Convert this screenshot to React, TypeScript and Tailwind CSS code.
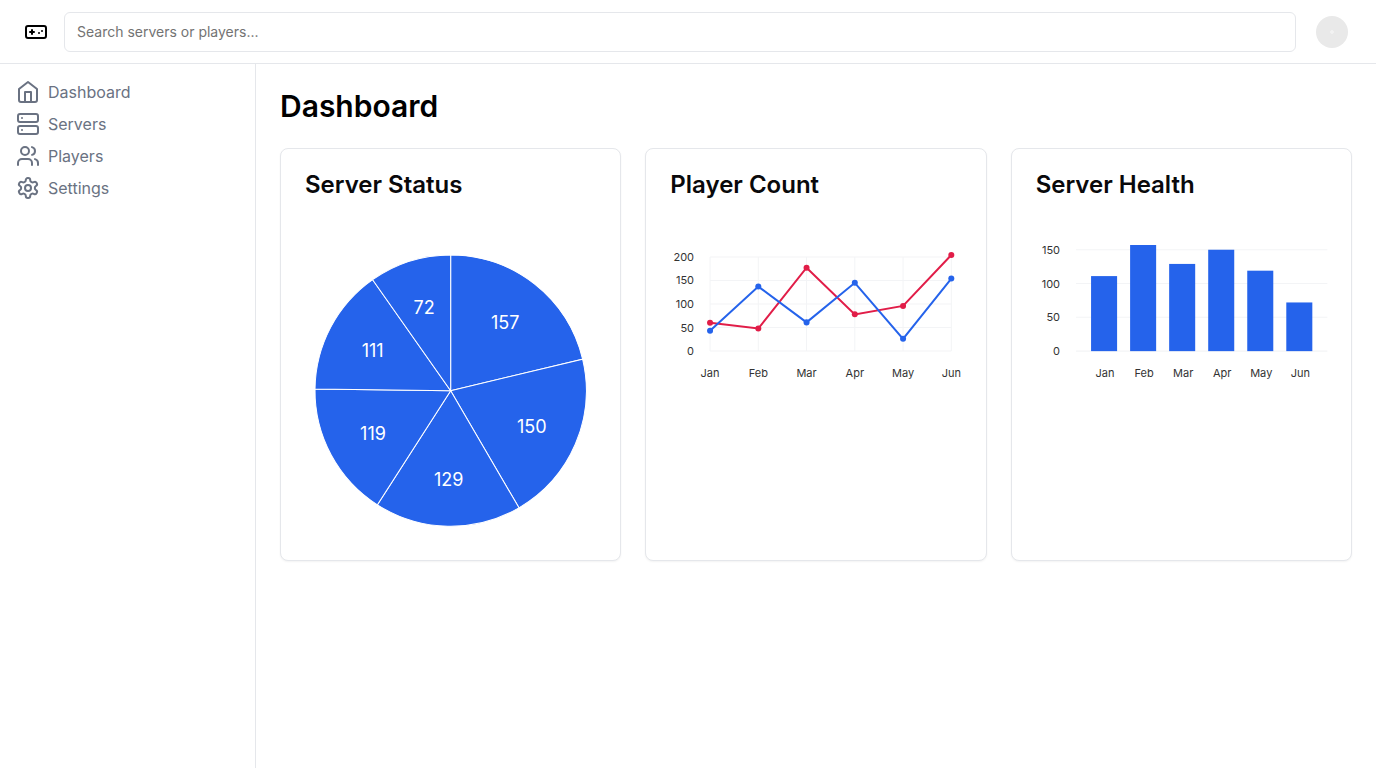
import { Gamepad, Server, Users } from "lucide-react";
import type { ComponentType, ReactNode } from "react";

const MONTHS = ["Jan", "Feb", "Mar", "Apr", "May", "Jun"];
const HEALTH = [111, 157, 129, 150, 119, 72];
const SERIES = [
  { id: "mobile", values: [60, 48, 177, 78, 96, 204], fill: "fill-[#e11d48]", line: "stroke-[#e11d48]" },
  { id: "desktop", values: [43, 137, 61, 145, 26, 154], fill: "fill-[#2563eb]", line: "stroke-[#2563eb]" },
];

type IconProps = { className?: string };

function OutlineIcon({ className, children }: IconProps & { children: ReactNode }) {
  return (
    <svg
      viewBox="0 0 24 24"
      fill="none"
      stroke="currentColor"
      strokeWidth="2"
      strokeLinecap="round"
      strokeLinejoin="round"
      className={className}
      aria-hidden="true"
    >
      {children}
    </svg>
  );
}

function HomeIcon({ className }: IconProps) {
  return (
    <OutlineIcon className={className}>
      <path d="m3 9 9-7 9 7v11a2 2 0 0 1-2 2H5a2 2 0 0 1-2-2z" />
      <polyline points="9 22 9 12 15 12 15 22" />
    </OutlineIcon>
  );
}

function SettingsIcon({ className }: IconProps) {
  return (
    <OutlineIcon className={className}>
      <path d="M12.22 2h-.44a2 2 0 0 0-2 2v.18a2 2 0 0 1-1 1.73l-.43.25a2 2 0 0 1-2 0l-.15-.08a2 2 0 0 0-2.73.73l-.22.38a2 2 0 0 0 .73 2.73l.15.1a2 2 0 0 1 1 1.72v.51a2 2 0 0 1-1 1.74l-.15.09a2 2 0 0 0-.73 2.73l.22.38a2 2 0 0 0 2.73.73l.15-.08a2 2 0 0 1 2 0l.43.25a2 2 0 0 1 1 1.73V20a2 2 0 0 0 2 2h.44a2 2 0 0 0 2-2v-.18a2 2 0 0 1 1-1.73l.43-.25a2 2 0 0 1 2 0l.15.08a2 2 0 0 0 2.73-.73l.22-.39a2 2 0 0 0-.73-2.73l-.15-.08a2 2 0 0 1-1-1.74v-.5a2 2 0 0 1 1-1.74l.15-.09a2 2 0 0 0 .73-2.73l-.22-.38a2 2 0 0 0-2.73-.73l-.15.08a2 2 0 0 1-2 0l-.43-.25a2 2 0 0 1-1-1.73V4a2 2 0 0 0-2-2z" />
      <circle cx="12" cy="12" r="3" />
    </OutlineIcon>
  );
}

const NAV: { label: string; icon: ComponentType<IconProps> }[] = [
  { label: "Dashboard", icon: HomeIcon },
  { label: "Servers", icon: Server },
  { label: "Players", icon: Users },
  { label: "Settings", icon: SettingsIcon },
];

const SIZE = 291;
const PLOT_LEFT = 40;
const PLOT_BOTTOM = 106;

function PieChart() {
  const slices = [...HEALTH].sort((a, b) => b - a);
  const total = slices.reduce((sum, v) => sum + v, 0);
  const c = SIZE / 2;
  const r = c - 10;
  const at = (angle: number, radius: number) => [c + radius * Math.sin(angle), c - radius * Math.cos(angle)];
  let start = 0;
  const arcs = slices.map((value) => {
    const end = start + (value / total) * Math.PI * 2;
    const [x1, y1] = at(start, r);
    const [x2, y2] = at(end, r);
    const [lx, ly] = at((start + end) / 2, r * 0.65);
    start = end;
    return { value, lx, ly, d: `M${c} ${c}L${x1} ${y1}A${r} ${r} 0 0 1 ${x2} ${y2}Z` };
  });
  return (
    <svg viewBox={`0 0 ${SIZE} ${SIZE}`} className="block w-full" role="img" aria-label="Server status">
      {arcs.map((arc) => (
        <path key={arc.value} d={arc.d} className="fill-[#2563eb] stroke-white" strokeWidth={1} />
      ))}
      {arcs.map((arc) => (
        <text key={arc.value} x={arc.lx} y={arc.ly + 1} textAnchor="middle" dominantBaseline="central" className="fill-white text-[18px]">
          {arc.value}
        </text>
      ))}
    </svg>
  );
}

function ValueAxis({ ticks, scale, right }: { ticks: number[]; scale: number; right: number }) {
  return (
    <>
      {ticks.map((tick) => {
        const y = PLOT_BOTTOM - tick * scale;
        return (
          <g key={tick}>
            <line x1={PLOT_LEFT} x2={right} y1={y} y2={y} className="stroke-gray-100" />
            <text x={PLOT_LEFT - 16} y={y} textAnchor="end" dominantBaseline="central" className="fill-[#333333] text-[11px]">
              {tick}
            </text>
          </g>
        );
      })}
    </>
  );
}

function MonthLabel({ x, children }: { x: number; children: ReactNode }) {
  return (
    <text x={x} y={PLOT_BOTTOM + 22} textAnchor="middle" dominantBaseline="central" className="fill-[#333333] text-[11px]">
      {children}
    </text>
  );
}

function LineChart() {
  const right = 281;
  const scale = 96 / 204;
  const px = (i: number) => PLOT_LEFT + (i * (right - PLOT_LEFT)) / 5;
  const py = (v: number) => PLOT_BOTTOM - v * scale;
  return (
    <svg viewBox="0 0 291 146" className="block w-full overflow-visible" role="img" aria-label="Player count">
      {MONTHS.map((month, i) => (
        <g key={month}>
          <line x1={px(i)} x2={px(i)} y1={py(200)} y2={PLOT_BOTTOM} className="stroke-gray-100" />
          <MonthLabel x={px(i)}>{month}</MonthLabel>
        </g>
      ))}
      <ValueAxis ticks={[0, 50, 100, 150, 200]} scale={scale} right={right} />
      {SERIES.map((s) => (
        <polyline key={s.id} points={s.values.map((v, i) => `${px(i)},${py(v)}`).join(" ")} fill="none" strokeWidth={2} className={s.line} />
      ))}
      {SERIES.map((s) => (
        <g key={s.id} className={s.fill}>
          {s.values.map((v, i) => (
            <circle key={i} cx={px(i)} cy={py(v)} r={3} />
          ))}
        </g>
      ))}
    </svg>
  );
}

function BarChart() {
  const scale = 106 / 157;
  return (
    <svg viewBox="0 0 291 146" className="block w-full overflow-visible" role="img" aria-label="Server health">
      <ValueAxis ticks={[0, 50, 100, 150]} scale={scale} right={291} />
      {HEALTH.map((v, i) => (
        <g key={MONTHS[i]}>
          <rect x={55 + i * 39} y={PLOT_BOTTOM - v * scale} width={26} height={v * scale} className="fill-[#2563eb]" />
          <MonthLabel x={69 + i * 39}>{MONTHS[i]}</MonthLabel>
        </g>
      ))}
    </svg>
  );
}

function Card({ title, children }: { title: string; children: ReactNode }) {
  return (
    <section className="rounded-lg border border-gray-200 bg-white shadow-xs">
      <h2 className="p-6 text-2xl leading-none font-semibold text-[#09090b]">{title}</h2>
      <div className="p-6">{children}</div>
    </section>
  );
}

export default function App() {
  return (
    <div className="flex min-h-screen flex-col bg-white font-['Inter',sans-serif] text-black">
      <header className="flex h-16 items-center gap-4 border-b border-gray-200 px-6">
        <a href="#" aria-label="Home">
          <Gamepad className="size-6" />
        </a>
        <form className="flex-1" role="search">
          <input
            type="search"
            aria-label="Search servers or players"
            placeholder="Search servers or players..."
            className="block h-10 w-full rounded-md border border-gray-200 px-3 text-sm placeholder:text-[#737373]"
          />
        </form>
        <button type="button" aria-label="Account" className="flex size-10 items-center justify-center rounded-full">
          <svg viewBox="0 0 32 32" className="size-8" aria-hidden="true">
            <circle cx="16" cy="16" r="16" className="fill-[#e9e9e9]" />
            <path d="M16 14v4M14 16h4" className="stroke-[#f3f3f3]" strokeWidth="1.5" />
          </svg>
        </button>
      </header>
      <div className="flex flex-1">
        <aside className="w-64 shrink-0 border-r border-gray-200 p-4">
          <nav className="flex flex-col gap-2">
            {NAV.map(({ label, icon: Icon }) => (
              <a key={label} href="#" className="flex items-center gap-2 text-base text-gray-500">
                <Icon className="size-6" />
                {label}
              </a>
            ))}
          </nav>
        </aside>
        <main className="min-w-0 flex-1 p-6">
          <h1 className="text-3xl font-semibold">Dashboard</h1>
          <div className="mt-6 grid grid-cols-3 gap-6">
            <Card title="Server Status">
              <PieChart />
            </Card>
            <Card title="Player Count">
              <LineChart />
            </Card>
            <Card title="Server Health">
              <BarChart />
            </Card>
          </div>
        </main>
      </div>
    </div>
  );
}
